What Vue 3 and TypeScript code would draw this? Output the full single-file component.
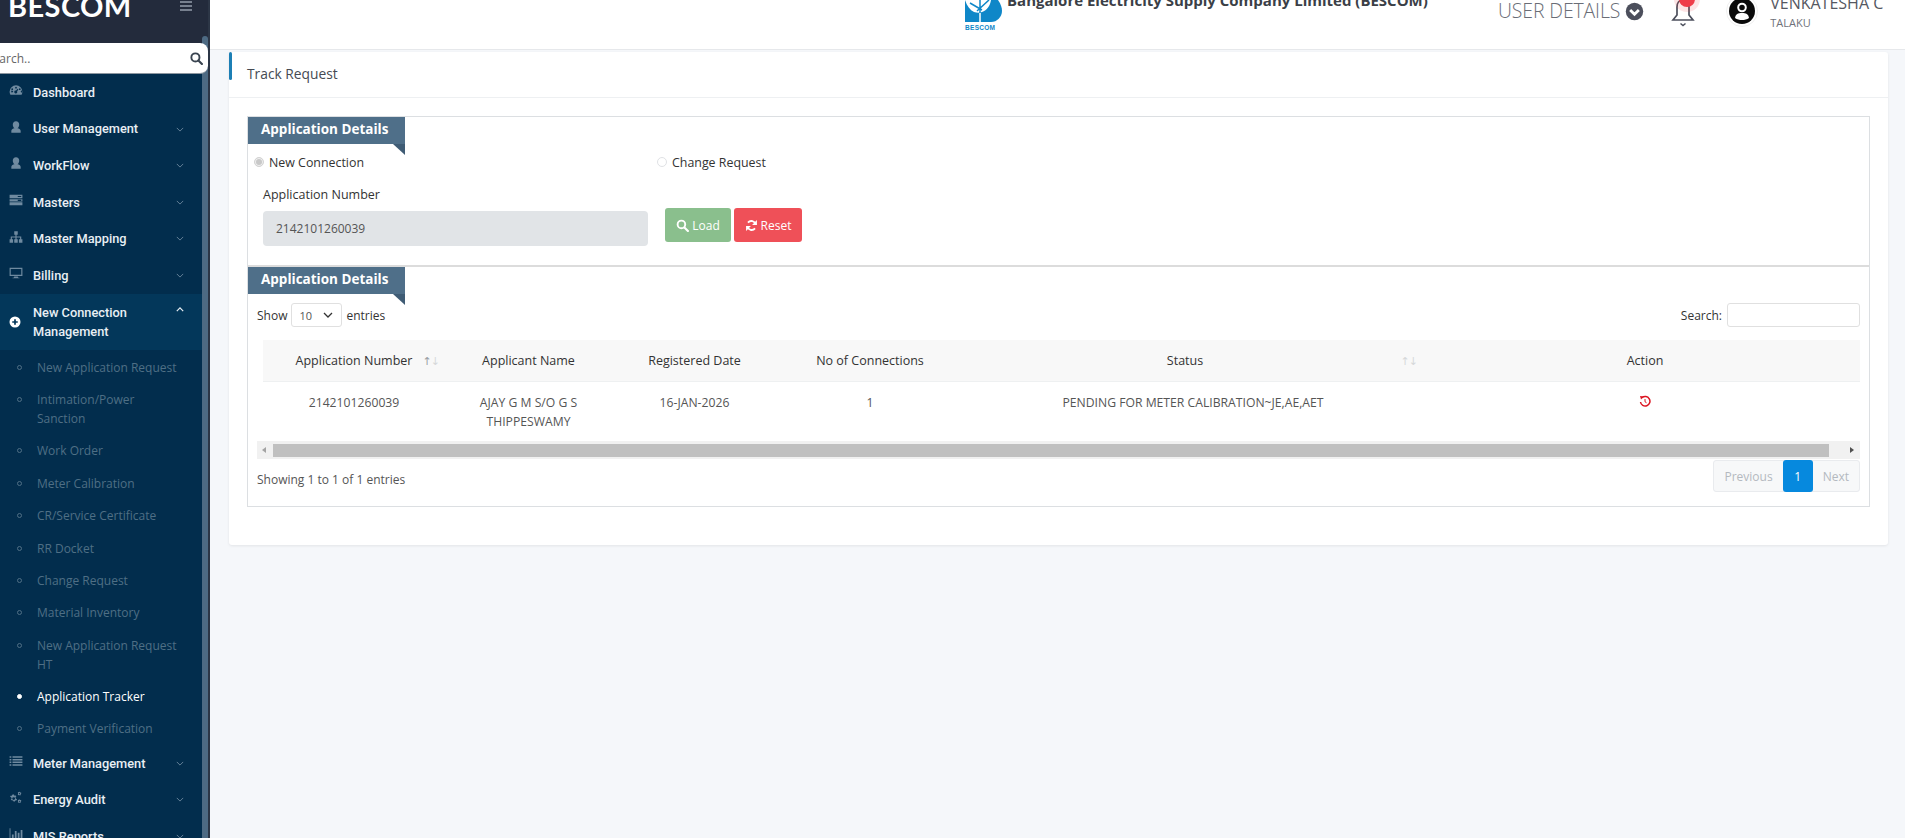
<script setup lang="ts">
interface NavItem { label: string; icon: string; open?: boolean; chevron?: boolean }
const icons: Record<string, string> = {
  gauge: 'M12 4a11 11 0 0 0-11 11c0 2 .5 3.600 1.400 5h19.200c.9-1.400 1.400-3 1.400-5A11 11 0 0 0 12 4zm0 2.500a1.500 1.500 0 1 1 0 3 1.500 1.500 0 0 1 0-3zM5.500 9a1.500 1.500 0 1 1 0 3 1.500 1.500 0 0 1 0-3zm13 0a1.500 1.500 0 1 1 0 3 1.500 1.500 0 0 1 0-3zM3.800 14.500a1.500 1.500 0 1 1 0 .1zm16.400 0a1.500 1.500 0 1 1 0 .1zM12 13l3-3 1 1-2.200 3.400A2.500 2.500 0 1 1 12 13z',
  user: 'M12 2a5.500 5.500 0 0 1 5.500 6c0 2.500-1.200 5-3 6 3.500.5 5.500 2 5.500 5v3H4v-3c0-3 2-4.500 5.500-5-1.800-1-3-3.500-3-6A5.500 5.500 0 0 1 12 2z',
  server: 'M1 3h22v6H1zM1 10.500h22v4H1zM1 16h22v5H1zM15 5v2h6V5zM15 11.500v2h6v-2z',
  sitemap: 'M9 2h6v6h-2v3h8v5h2v6h-6v-6h2v-3h-6v3h2v6H9v-6h2v-3H5v3h2v6H1v-6h2v-5h8V8H9z',
  desktop: 'M1 3h22v14H1zM3 5v10h18V5zM9 18h6l1 2h2v1H6v-1h2z',
  plus: 'M12 1a11 11 0 1 0 0 22 11 11 0 0 0 0-22zm-1.700 5.500h3.400v3.800h3.800v3.400h-3.800v3.800h-3.400v-3.800H6.500v-3.400h3.800z',
  list: 'M1 4h3v2.500H1zM6 4h17v2.500H6zM1 8.500h3V11H1zM6 8.500h17V11H6zM1 13h3v2.500H1zM6 13h17v2.500H6zM1 17.500h3V20H1zM6 17.500h17V20H6z',
  cogs: 'M8.500 6l1 2 2.200-.5 1 1.700-1.500 1.600.5 2.200 2 1-.5 2-2.300.1-1 2-2 .1-1-2-2.300-.3L3 15l1.500-1.700L4 11 2 10l.5-2 2.300.1L6 6zM8 10.500a2.500 2.500 0 1 0 0 5 2.500 2.500 0 0 0 0-5zM18.500 1l.7 1.500 1.600.2.300 1.600-1.200 1 .3 1.600-1.400.8-1.300-1-1.500.5-1-1.300.8-1.400-.7-1.500 1.100-1.100 1.500.3zM18 3.500a1 1 0 1 0 0 2 1 1 0 0 0 0-2zM18.500 14l.7 1.500 1.600.2.300 1.600-1.200 1 .3 1.600-1.400.8-1.300-1-1.500.5-1-1.300.8-1.400-.7-1.500 1.100-1.100 1.500.3zM18 16.500a1 1 0 1 0 0 2 1 1 0 0 0 0-2z',
  bars: 'M1 2h1.500v19H23v1.500H1zM5 13h3v6H5zM10 7h3v12h-3zM15 10h3v9h-3zM20 5h3v14h-3z',
}
const topNav: NavItem[] = [
  { label: 'Dashboard', icon: 'gauge' },
  { label: 'User Management', icon: 'user', chevron: true },
  { label: 'WorkFlow', icon: 'user', chevron: true },
  { label: 'Masters', icon: 'server', chevron: true },
  { label: 'Master Mapping', icon: 'sitemap', chevron: true },
  { label: 'Billing', icon: 'desktop', chevron: true },
]
const subNav = [
  'New Application Request', 'Intimation/Power Sanction', 'Work Order', 'Meter Calibration',
  'CR/Service Certificate', 'RR Docket', 'Change Request', 'Material Inventory',
  'New Application Request HT', 'Application Tracker', 'Payment Verification',
]
const bottomNav: NavItem[] = [
  { label: 'Meter Management', icon: 'list', chevron: true },
  { label: 'Energy Audit', icon: 'cogs', chevron: true },
  { label: 'MIS Reports', icon: 'bars', chevron: true },
]
</script>

<template>
  <div class="app">
    <aside class="sidebar">
      <div class="brand">
        <span class="brand-name">BESCOM</span>
        <span class="burger"><i></i><i></i><i></i></span>
      </div>
      <div class="side-search">
        <span class="side-search-text">Search..</span>
        <svg class="side-search-icon" viewBox="0 0 24 24"><circle cx="10" cy="10" r="7.500" fill="none" stroke="currentColor" stroke-width="3.500"/><path d="M15.500 15.500 22 22" stroke="currentColor" stroke-width="4" stroke-linecap="round"/></svg>
      </div>
      <nav class="nav">
        <a v-for="n in topNav" :key="n.label" class="nav-item">
          <svg class="nav-icon" viewBox="0 0 24 24"><path :d="icons[n.icon]" fill-rule="evenodd"/></svg>
          <span class="nav-label">{{ n.label }}</span>
          <svg v-if="n.chevron" class="chev" viewBox="0 0 10 6"><path d="M1 1l4 4 4-4" fill="none" stroke="currentColor" stroke-width="1.100"/></svg>
        </a>
        <a class="nav-item nav-open">
          <svg class="nav-icon plus-icon" viewBox="0 0 24 24"><path :d="icons.plus" fill-rule="evenodd"/></svg>
          <span class="nav-label">New Connection Management</span>
          <svg class="chev chev-up" viewBox="0 0 10 6"><path d="M1 5l4-4 4 4" fill="none" stroke="currentColor" stroke-width="1.500"/></svg>
        </a>
        <ul class="sub">
          <li v-for="s in subNav" :key="s" :class="{ current: s === 'Application Tracker' }">
            <span class="bullet"></span><span class="sub-label">{{ s }}</span>
          </li>
        </ul>
        <a v-for="n in bottomNav" :key="n.label" class="nav-item">
          <svg class="nav-icon" viewBox="0 0 24 24"><path :d="icons[n.icon]" fill-rule="evenodd"/></svg>
          <span class="nav-label">{{ n.label }}</span>
          <svg class="chev" viewBox="0 0 10 6"><path d="M1 1l4 4 4-4" fill="none" stroke="currentColor" stroke-width="1.100"/></svg>
        </a>
      </nav>
      <div class="side-scroll"></div>
    </aside>

    <div class="content">
      <header class="topbar">
        <div class="logo">
          <svg viewBox="0 0 37 22">
            <path d="M0 0h33c3 4 4 8 4 11 0 6-5 11-11 11H0z" fill="#0f87c8"/>
            <path d="M0 0c2 6 5 10 9 12 3 1 6 1 8 0 5-2 8-6 9-12z" fill="#fff"/>
            <path d="M15 0v15M5 3l12 7M24 0 12 11" stroke="#0f87c8" stroke-width="1.500"/>
            <path d="M15 13v9" stroke="#fff" stroke-width="1.500"/>
          </svg>
          <span class="logo-text">BESCOM</span>
        </div>
        <span class="org">Bangalore Electricity Supply Company Limited (BESCOM)</span>
        <span class="user-details">USER DETAILS</span>
        <svg class="ud-icon" viewBox="0 0 24 24"><circle cx="12" cy="12" r="11" fill="#4c4f5c"/><path d="M6.500 10l5.500 5.500 5.500-5.500" fill="none" stroke="#fff" stroke-width="3.500"/></svg>
        <span class="bell">
          <svg viewBox="0 0 26 28"><path d="M13 0c-4 0-6 3-6 7v8l-4 5h20l-4-5V7c0-4-2-7-6-7z" fill="none" stroke="#4c4f5c" stroke-width="1.700"/><path d="M10.500 23.500l2.500 2 2.500-2" fill="none" stroke="#4c4f5c" stroke-width="1.500"/></svg>
          <i class="bell-badge"></i>
        </span>
        <svg class="avatar" viewBox="0 0 32 32"><circle cx="16" cy="16" r="15.500" fill="#fff" stroke="#f0f0f0"/><circle cx="16" cy="16" r="13" fill="#0a0a0a"/><circle cx="16" cy="12.500" r="3.800" fill="none" stroke="#fff" stroke-width="2"/><path d="M9 23c.5-4 3-5 7-5s6.500 1 7 5c-2 1.500-4.500 2-7 2s-5-.5-7-2z" fill="#fff"/></svg>
        <div class="who">
          <div class="who-name">VENKATESHA C</div>
          <div class="who-role">TALAKU</div>
        </div>
      </header>

      <main class="main">
        <section class="card">
          <div class="card-title">Track Request</div>
          <div class="card-body">
            <div class="box">
              <div class="ribbon">Application Details</div>
              <div class="radios">
                <label class="radio radio-a"><i class="dot on"></i>New Connection</label>
                <label class="radio"><i class="dot"></i>Change Request</label>
              </div>
              <div class="form-row">
                <div class="field">
                  <div class="field-label">Application Number</div>
                  <div class="field-input">2142101260039</div>
                </div>
                <div class="buttons">
                  <button class="btn btn-load">
                    <svg viewBox="0 0 24 24"><circle cx="10" cy="10" r="7" fill="none" stroke="#fff" stroke-width="3.500"/><path d="M15.500 15.500 22 22" stroke="#fff" stroke-width="4" stroke-linecap="round"/></svg>Load
                  </button>
                  <button class="btn btn-reset">
                    <svg viewBox="0 0 24 24"><path d="M20 10A8.500 8.500 0 0 0 5.500 6.500M4 14a8.500 8.500 0 0 0 14.500 3.500" fill="none" stroke="#fff" stroke-width="3.500"/><path d="M22 2v9h-9zM2 22v-9h9z" fill="#fff"/></svg>Reset
                  </button>
                </div>
              </div>

              <div class="divider"></div>

              <div class="ribbon">Application Details</div>
              <div class="dt-top">
                <div class="dt-len">Show <span class="dt-select">10<svg viewBox="0 0 10 6"><path d="M1 1l4 4 4-4" fill="none" stroke="#333" stroke-width="1.300"/></svg></span> entries</div>
                <div class="dt-search">Search: <span class="dt-search-input"></span></div>
              </div>
              <div class="table-wrap">
                <table class="table">
                  <colgroup>
                    <col class="c1"><col class="c2"><col class="c3"><col class="c4"><col class="c5"><col class="c6">
                  </colgroup>
                  <thead>
                    <tr>
                      <th>Application Number<span class="sort"><b>↑</b><i>↓</i></span></th>
                      <th>Applicant Name</th>
                      <th>Registered Date</th>
                      <th>No of Connections</th>
                      <th class="th-status">Status<span class="sort sort-pale"><b>↑</b><i>↓</i></span></th>
                      <th>Action</th>
                    </tr>
                  </thead>
                  <tbody>
                    <tr>
                      <td>2142101260039</td>
                      <td>AJAY G M S/O G S THIPPESWAMY</td>
                      <td>16-JAN-2026</td>
                      <td>1</td>
                      <td>PENDING FOR METER CALIBRATION~JE,AE,AET</td>
                      <td>
                        <svg class="history" viewBox="0 0 24 24"><path d="M6 5.500A9.500 9.500 0 1 1 3 14" fill="none" stroke="#dc1420" stroke-width="3"/><path d="M2 2l8 1-6 6z" fill="#dc1420"/><path d="M12 8v5.500l3 2" fill="none" stroke="#dc1420" stroke-width="2"/></svg>
                      </td>
                    </tr>
                  </tbody>
                </table>
              </div>
              <div class="hscroll">
                <span class="arrow-l"></span>
                <span class="thumb"></span>
                <span class="arrow-r"></span>
              </div>
              <div class="dt-bottom">
                <div class="dt-info">Showing 1 to 1 of 1 entries</div>
                <div class="pager">
                  <span class="pg">Previous</span>
                  <span class="pg pg-on">1</span>
                  <span class="pg">Next</span>
                </div>
              </div>
            </div>
          </div>
        </section>
      </main>
    </div>
  </div>
</template>

<style>
html, body { margin: 0; height: 100%; overflow: hidden; background: #f5f7fa; }
</style>

<style scoped>
.app { display: flex; width: 1905px; height: 838px; overflow: hidden; font-family: "Open Sans", "Liberation Sans", sans-serif; font-size: 12px; color: #333; }

.sidebar { position: relative; flex: 0 0 202px; width: 202px; background: #022d4d; border-right: 2px solid #2c3646; overflow: hidden; display: flex; flex-direction: column; padding-right: 6px; box-sizing: content-box; }
.brand { flex: 0 0 43px; margin-right: -6px; height: 43px; background: #232b3c; display: flex; justify-content: space-between; padding: 0 16px 0 8px; overflow: hidden; }
.brand-name { margin-top: -14px; font-family: "Lato", "Open Sans", sans-serif; font-weight: 700; font-size: 29px; line-height: 40px; letter-spacing: .4px; color: #fff; }
.burger { display: flex; flex-direction: column; gap: 2px; margin-top: 1px; width: 12px; }
.burger i { display: block; height: 2px; background: #77808f; }
.side-search { position: relative; z-index: 2; flex: 0 0 30px; height: 30px; margin-right: -6px; width: 208px; background: #fff; border-bottom: 1px solid #8c96a0; border-radius: 0 8px 8px 0; display: flex; align-items: center; justify-content: space-between; overflow: hidden; box-sizing: content-box; }
.side-search-text { margin-left: -14px; font-size: 12px; color: #666; }
.side-search-icon { width: 13px; height: 13px; margin-right: 5px; color: #3a4450; }

.nav { display: flex; flex-direction: column; }
.nav-item { display: flex; align-items: center; min-height: 36.600px; box-sizing: border-box; padding-left: 9px; font-family: Roboto, "Open Sans", sans-serif; font-weight: 500; font-size: 12.800px; line-height: 19px; color: #e9eff4; position: relative; }
.nav-icon { flex: 0 0 14px; width: 14px; height: 14px; margin-right: 10px; fill: #6f8aa0; margin-top: -4px; }
.nav-label { flex: 1; padding-right: 40px; }
.chev { position: absolute; left: 176px; top: 16px; width: 8px; height: 5px; color: #6f8aa0; }
.nav-open { background: #03375a; min-height: 56px; }
.plus-icon { fill: #fff; width: 12px; height: 12px; flex-basis: 12px; margin-right: 12px; margin-top: 0; }
.chev-up { color: #e9eff4; top: 13px; }

.sub { list-style: none; margin: 0; padding: 1px 0 0; font-size: 12px; line-height: 19px; color: #4f6f85; font-family: "Open Sans", sans-serif; }
.sub li { display: flex; padding: 7px 25px 6.400px 17px; }
.bullet { flex: 0 0 5px; width: 5px; height: 5px; margin: 7px 15px 0 0; border: 1px solid #4f6f85; border-radius: 50%; box-sizing: border-box; }
.sub li.current { color: #fff; font-weight: 500; }
.sub li.current .bullet { background: #fff; border-color: #fff; }

.side-scroll { position: absolute; top: 36px; bottom: 0; right: 0; width: 6px; background: #4d6a83; border-radius: 3px 3px 0 0; }

.content { flex: 1; min-width: 0; display: flex; flex-direction: column; }
.topbar { flex: 0 0 50px; height: 50px; box-sizing: border-box; background: #fff; border-bottom: 1px solid #e6e8eb; box-shadow: 0 1px 2px rgba(0,0,0,.05); display: flex; align-items: flex-start; overflow: hidden; padding-left: 755px; }
.logo { flex: 0 0 37px; width: 37px; height: 29px; display: flex; flex-direction: column; }
.logo svg { display: block; width: 37px; height: 22px; flex: none; }
.logo-text { margin-top: 3px; font: 700 6.500px/6px "Liberation Sans", sans-serif; color: #0f87c8; letter-spacing: .3px; }
.org { margin: -10px 0 0 5px; width: 491px; font-weight: 700; font-size: 15px; line-height: 20px; color: #3b3f47; white-space: nowrap; }
.user-details { margin-top: -2px; font-size: 19.400px; line-height: 26px; color: #6a6d76; white-space: nowrap; font-weight: 300; letter-spacing: -.1px; }
.ud-icon { width: 19px; height: 19px; margin: 2px 0 0 5px; }
.bell { position: relative; width: 26px; height: 28px; margin: 0 0 0 26px; }
.bell svg { display: block; width: 26px; height: 28px; }
.bell-badge { position: absolute; left: 9px; top: -9px; width: 16px; height: 16px; border-radius: 50%; background: #ef3d4a; box-shadow: 0 0 0 5px rgba(239,61,74,.14); }
.avatar { width: 32px; height: 32px; margin: -5px 0 0 30px; }
.who { margin: -7px 0 0 12px; }
.who-name { font-size: 16px; line-height: 20px; color: #555862; white-space: nowrap; }
.who-role { font-size: 11px; line-height: 15px; margin-top: 2px; color: #6f727a; }

.main { flex: 1; padding: 2px 17px 0 19px; background: #f5f7fa; }
.card { position: relative; background: #fff; border-radius: 3px; box-shadow: 0 1px 3px rgba(0,0,0,.08); height: 493px; }
.card::before { content: ""; position: absolute; left: 0; top: 0; width: 3px; height: 28px; background: #1c7fb5; border-radius: 2px; }
.card-title { height: 46px; box-sizing: border-box; padding: 13px 18px 0; font-size: 13.800px; line-height: 18px; font-weight: 500; color: #454a53; border-bottom: 1px solid #eef0f2; }
.card-body { padding: 18px 18px 0; }
.box { border: 1px solid #dcdfe2; height: 391px; box-sizing: border-box; position: relative; }

.ribbon { position: relative; width: 157px; height: 27px; box-sizing: border-box; padding-left: 13px; background: #4f6f89; color: #fff; font-weight: 700; font-size: 13.500px; line-height: 24px; white-space: nowrap; }
.ribbon::after { content: ""; position: absolute; right: 0; top: 27px; border-style: solid; border-width: 0 12px 11px 0; border-color: transparent #3f5c75 transparent transparent; }

.radios { display: flex; height: 36px; padding-left: 6px; align-items: center; color: #333; font-size: 12.400px; }
.radio { display: flex; align-items: center; }
.radio-a { width: 403px; }
.dot { display: block; width: 10px; height: 10px; border-radius: 50%; border: 1px solid #e0e2e5; background: #fff; margin-right: 5px; box-sizing: border-box; }
.dot.on { background: #c8c8c8; border-color: #d4d4d4; box-shadow: inset 0 0 0 1px #f0f0f0; }

.form-row { display: flex; align-items: flex-start; padding-left: 15px; }
.field { width: 385px; margin-top: 6px; }
.field-label { font-size: 12.500px; line-height: 18px; color: #333; margin-bottom: 7px; }
.field-input { height: 35px; box-sizing: border-box; background: #e1e4e7; border-radius: 4px; padding: 0 13px; line-height: 35px; font-size: 12px; color: #555; }
.buttons { display: flex; gap: 3px; margin: 28px 0 0 17px; }
.btn { display: flex; align-items: center; justify-content: center; height: 34px; border: 0; border-radius: 3px; padding: 0; color: #fff; font: 12px "Open Sans", sans-serif; }
.btn svg { width: 13px; height: 13px; margin-right: 3px; }
.btn-load { width: 66px; background: #8abf8d; }
.btn-reset { width: 68px; background: #ef5058; }

.divider { height: 2px; background: #dcdcdc; margin-top: 19px; }

.dt-top { display: flex; justify-content: space-between; align-items: center; height: 24px; margin-top: 9px; padding: 0 9px; color: #333; }
.dt-len { display: flex; align-items: center; gap: 3px; }
.dt-select { display: flex; align-items: center; justify-content: space-between; box-sizing: border-box; width: 51px; height: 24px; padding: 0 7px; margin: 0 1px; border: 1px solid #e0e0e0; border-radius: 3px; font-size: 11px; color: #555; }
.dt-select svg { width: 10px; height: 6px; margin-right: 1px; }
.dt-search { display: flex; align-items: center; gap: 5px; font-weight: 500; }
.dt-search-input { display: block; width: 133px; height: 24px; box-sizing: border-box; border: 1px solid #e0e0e0; border-radius: 3px; }

.table-wrap { margin: 13px 9px 0 15px; overflow: hidden; height: 103px; }
.table { width: 1604px; table-layout: fixed; border-collapse: collapse; text-align: center; }
.c1 { width: 182px; } .c2 { width: 167px; } .c3 { width: 165px; } .c4 { width: 186px; } .c5 { width: 460px; } .c6 { width: 444px; }
.table th { position: relative; height: 41px; padding: 0 10px; background: #f8f8f8; font-weight: 500; font-size: 12.500px; color: #333; border-bottom: 1px solid #eef0f1; }
.table td { padding: 11px 10px 0; vertical-align: top; line-height: 19px; font-size: 12.200px; color: #555; }
.th-status { padding-right: 26px !important; }
.sort { position: absolute; right: 6px; top: 13px; font-size: 11px; line-height: 18px; letter-spacing: -1px; font-family: "DejaVu Sans", sans-serif; }
.sort b { font-weight: 400; color: #9aa0a4; }
.sort i { font-style: normal; color: #d6d8da; }
.sort-pale b { color: #d6d8da; }
.history { width: 12px; height: 12px; }

.hscroll { display: flex; align-items: center; height: 18px; margin: -2px 9px 0; background: #f1f1f1; }
.arrow-l { width: 0; height: 0; border-style: solid; border-width: 3.500px 4px 3.500px 0; border-color: transparent #a3a3a3 transparent transparent; margin: 0 7px 0 5px; }
.thumb { flex: 1; height: 13px; background: #c0c0c0; }
.arrow-r { width: 0; height: 0; border-style: solid; border-width: 3.500px 0 3.500px 4px; border-color: transparent transparent transparent #505050; margin: 0 6px 0 21px; }

.dt-bottom { display: flex; justify-content: space-between; align-items: flex-start; padding: 1px 9px 0; }
.dt-info { margin-top: 11px; line-height: 17px; color: #555; }
.pager { display: flex; height: 32px; border: 1px solid #e9ebee; border-radius: 3px; background: #f7f8f9; box-sizing: border-box; }
.pg { display: flex; align-items: center; justify-content: center; padding: 0 10px; color: #b4b9bf; }
.pg-on { width: 30px; margin: -1px 0; box-sizing: border-box; padding: 0; background: #0689de; color: #fff; border-radius: 3px; }
</style>
